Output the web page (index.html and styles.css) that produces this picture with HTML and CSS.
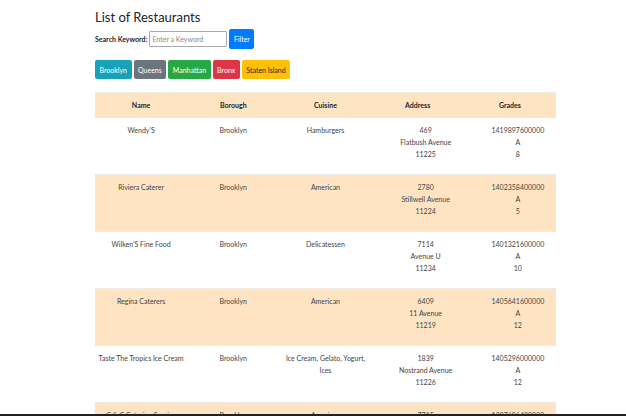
FILE: index.html
```html
<!DOCTYPE html>
<html>
<head>
<meta charset="utf-8">
<link rel="stylesheet" href="styles.css">
</head>
<body>
<div class="page">
  <h1 class="title">List of Restaurants</h1>
  <div class="search">
    <label class="search-label">Search Keyword:</label>
    <input class="search-input" type="text" placeholder="Enter a Keyword">
    <button class="btn btn-primary">Filter</button>
  </div>
  <div class="boroughs">
    <button class="btn btn-info">Brooklyn</button>
    <button class="btn btn-secondary">Queens</button>
    <button class="btn btn-success">Manhattan</button>
    <button class="btn btn-danger">Bronx</button>
    <button class="btn btn-warning">Staten Island</button>
  </div>
  <table class="table">
    <thead>
      <tr><th>Name</th><th>Borough</th><th>Cuisine</th><th>Address</th><th>Grades</th></tr>
    </thead>
    <tbody>
      <tr>
        <td>Wendy'S</td><td>Brooklyn</td><td>Hamburgers</td>
        <td><ul class="list"><li>469</li><li>Flatbush Avenue</li><li>11225</li></ul></td>
        <td><ul class="list"><li>1419897600000</li><li>A</li><li>8</li></ul></td>
      </tr>
      <tr>
        <td>Riviera Caterer</td><td>Brooklyn</td><td>American</td>
        <td><ul class="list"><li>2780</li><li>Stillwell Avenue</li><li>11224</li></ul></td>
        <td><ul class="list"><li>1402358400000</li><li>A</li><li>5</li></ul></td>
      </tr>
      <tr>
        <td>Wilken'S Fine Food</td><td>Brooklyn</td><td>Delicatessen</td>
        <td><ul class="list"><li>7114</li><li>Avenue U</li><li>11234</li></ul></td>
        <td><ul class="list"><li>1401321600000</li><li>A</li><li>10</li></ul></td>
      </tr>
      <tr>
        <td>Regina Caterers</td><td>Brooklyn</td><td>American</td>
        <td><ul class="list"><li>6409</li><li>11 Avenue</li><li>11219</li></ul></td>
        <td><ul class="list"><li>1405641600000</li><li>A</li><li>12</li></ul></td>
      </tr>
      <tr>
        <td>Taste The Tropics Ice Cream</td><td>Brooklyn</td><td>Ice Cream, Gelato, Yogurt, Ices</td>
        <td><ul class="list"><li>1839</li><li>Nostrand Avenue</li><li>11226</li></ul></td>
        <td><ul class="list"><li>1405296000000</li><li>A</li><li>12</li></ul></td>
      </tr>
      <tr>
        <td>C &amp; C Catering Service</td><td>Brooklyn</td><td>American</td>
        <td><ul class="list"><li>7715</li><li>18 Avenue</li><li>11214</li></ul></td>
        <td><ul class="list"><li>1397606400000</li><li>A</li><li>12</li></ul></td>
      </tr>
    </tbody>
  </table>
</div>
<div class="bottom-bar"></div>
</body>
</html>
```
FILE: styles.css
```css
html { overflow: hidden; }
body {
  margin: 0;
  font-family: Lato, "Liberation Sans", sans-serif;
  color: #444;
  background: #fff;
}
.page {
  padding: 8px 0 0 95px;
  width: 461px;
}
.title {
  margin: 0;
  font-size: 13px;
  font-weight: normal;
  line-height: 18px;
  color: #212529;
}
.search {
  display: flex;
  align-items: center;
  margin-top: 3px;
  height: 20px;
}
.search-label {
  font-size: 7px;
  font-weight: bold;
  color: #212529;
  margin-right: 2px;
}
.search-input {
  box-sizing: border-box;
  width: 78px;
  height: 16px;
  margin: 0 2px 0 0;
  padding: 0 2px;
  border: 1px solid #a9a9a9;
  border-radius: 1px;
  font-family: inherit;
  font-size: 7px;
  color: #333;
}
.search-input::placeholder { color: #8a8a8a; }
.btn {
  box-sizing: border-box;
  height: 20px;
  padding: 0 3.5px;
  border: 1px solid transparent;
  border-radius: 2px;
  font-family: inherit;
  font-size: 7px;
  color: #fff;
  margin: 0;
}
.btn-primary { background: #007bff; border-color: #007bff; width: 25px; padding: 0; }
.boroughs {
  display: flex;
  gap: 2px;
  margin-top: 11px;
}
.boroughs .btn { height: 19px; }
.btn-info { background: #17a2b8; }
.btn-secondary { background: #6c757d; }
.btn-success { background: #28a745; }
.btn-danger { background: #dc3545; }
.btn-warning { background: #ffc107; color: #212529; }
.table {
  margin-top: 13px;
  width: 461px;
  table-layout: fixed;
  border-collapse: collapse;
  font-size: 7px;
  line-height: 12px;
}
.table th, .table td {
  text-align: center;
  vertical-align: top;
  padding: 6px 3px;
  border-top: 1px solid #f0ebe5;
}
.table th {
  height: 12px;
  padding: 6px 3px;
  color: #212529;
  background: #ffe4c4;
}
.table tbody tr { height: 57px; }
.table tbody tr:nth-child(even) td { background: #ffe4c4; }
.list {
  list-style: none;
  margin: 0 0 7px;
  padding: 0 0 0 16px;
}
.bottom-bar {
  position: fixed;
  left: 0;
  right: 0;
  bottom: 0;
  height: 2px;
  background: #222;
}
```
